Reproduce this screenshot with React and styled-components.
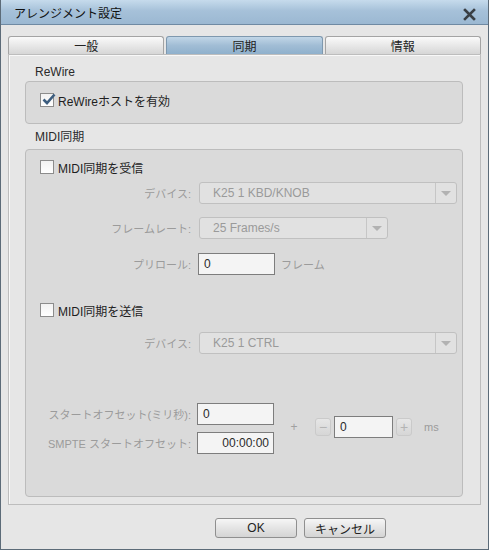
import React from "react";
import styled, { createGlobalStyle } from "styled-components";

const GlobalStyle = createGlobalStyle`
  html, body {
    margin: 0;
    padding: 0;
    background: #e6e6e6;
  }
  body {
    font-family: "Liberation Sans", "Noto Sans CJK JP", sans-serif;
    font-size: 12px;
    color: #1e1e1e;
  }
`;

const Window = styled.div`
  width: 489px;
  height: 550px;
  box-sizing: border-box;
  border: 1px solid #5c6b78;
  border-top: none;
  background: #e6e6e6;
  display: flex;
  flex-direction: column;
`;

const TitleBar = styled.div`
  height: 24px;
  flex: none;
  display: flex;
  align-items: center;
  justify-content: space-between;
  padding: 0 12px 0 13px;
  background: linear-gradient(#c6dbec, #a6c1d9 45%, #9bb8d2);
  border-bottom: 1px solid #6f8aa3;
  font-size: 12px;
  color: #111;
`;

const CloseIcon = () => (
  <svg width="13" height="13" viewBox="0 0 13 13" style={{ marginTop: 5 }}>
    <path d="M2 2 L11 11 M11 2 L2 11" stroke="#3a3f44" strokeWidth="2.6" strokeLinecap="square" />
  </svg>
);

const Body = styled.div`
  flex: 1;
  display: flex;
  flex-direction: column;
  padding: 11px 7px 0 7px;
`;

const Tabs = styled.div`
  display: flex;
  gap: 2px;
  height: 18px;
`;

const Tab = styled.div`
  flex: 1;
  box-sizing: border-box;
  border: 1px solid ${(p) => (p.$active ? "#7e98ae" : "#a4a4a4")};
  border-bottom: none;
  border-radius: 3px 3px 0 0;
  background: ${(p) =>
    p.$active
      ? "linear-gradient(#c1d6e7, #a1bdd5 50%, #8fb0cc)"
      : "linear-gradient(#fafafa, #e8e8e8 50%, #d6d6d6)"};
  display: flex;
  align-items: center;
  justify-content: center;
  font-size: 12px;
  color: #222;
`;

const Panel = styled.div`
  height: 451px;
  box-sizing: border-box;
  border: 1px solid #bdbdbd;
  box-shadow: inset 1px 1px 0 #f8f8f8;
  background: #e6e6e6;
  padding: 10px 17px 0 16px;
  display: flex;
  flex-direction: column;
`;

const SectionTitle = styled.div`
  padding-left: 10px;
  height: 14px;
  line-height: 14px;
  margin-top: ${(p) => p.$mt || 0}px;
  color: #2a2a2a;
`;

const Group = styled.div`
  box-sizing: border-box;
  height: ${(p) => p.$h}px;
  margin-top: ${(p) => p.$mt || 0}px;
  background: #dadada;
  border: 1px solid #bcbcbc;
  border-radius: 4px;
  padding: ${(p) => p.$pt}px 0 0 14px;
  display: flex;
  flex-direction: column;
`;

const CheckRow = styled.label`
  display: flex;
  align-items: center;
  gap: 4px;
  height: 16px;
  margin-top: ${(p) => p.$mt || 0}px;
  color: #1e1e1e;
`;

const Box = styled.span`
  width: 14px;
  height: 14px;
  box-sizing: border-box;
  border: 1px solid #8c8c8c;
  background: linear-gradient(#f2f2f2, #ffffff);
  position: relative;
  flex: none;
`;

const Check = () => (
  <svg width="16" height="14" viewBox="0 0 16 14" style={{ position: "absolute", left: 0, top: -2 }}>
    <path d="M2.5 7.5 L6 11 L13.5 2.5" fill="none" stroke="#3c5d7f" strokeWidth="2.6" />
  </svg>
);

const Field = styled.div`
  display: flex;
  align-items: center;
  height: 22px;
  margin-top: ${(p) => p.$mt || 0}px;
`;

const Label = styled.div`
  width: ${(p) => p.$w || 159}px;
  padding-right: ${(p) => p.$pr ?? 8}px;
  box-sizing: border-box;
  text-align: right;
  color: #9b9b9b;
  white-space: nowrap;
  font-size: 11px;
`;

const Select = styled.div`
  width: ${(p) => p.$w}px;
  height: 22px;
  box-sizing: border-box;
  border: 1px solid #c0c0c0;
  border-radius: 3px;
  background: #e1e1e1;
  display: flex;
  align-items: center;
  color: #9a9a9a;
`;

const SelectText = styled.div`
  flex: 1;
  padding-left: 13px;
`;

const Arrow = styled.div`
  width: 20px;
  height: 100%;
  border-left: 1px solid #c6c6c6;
  display: flex;
  align-items: center;
  justify-content: center;
  &::after {
    content: "";
    border-left: 5px solid transparent;
    border-right: 5px solid transparent;
    border-top: 5px solid #b2b2b2;
  }
`;

const Input = styled.div`
  width: ${(p) => p.$w || 77}px;
  height: 22px;
  box-sizing: border-box;
  border: 1px solid #7d7d7d;
  background: #f4f4f4;
  display: flex;
  align-items: center;
  justify-content: ${(p) => (p.$right ? "flex-end" : "flex-start")};
  padding: 0 4px 0 5px;
  color: #2a2a2a;
`;

const Unit = styled.span`
  margin-left: ${(p) => p.$ml ?? 6}px;
  color: #9b9b9b;
  font-size: 11px;
`;

const OffsetBlock = styled.div`
  display: flex;
  align-items: center;
  margin-top: 49px;
`;

const OffsetFields = styled.div`
  display: flex;
  flex-direction: column;
  gap: 7px;
`;

const Nudge = styled.div`
  display: flex;
  align-items: center;
  margin-left: 10px;
  margin-top: -3px;
  color: #a0a0a0;
`;

const Plus = styled.span`
  width: 20px;
  text-align: center;
  margin-right: 11px;
`;

const StepButton = styled.div`
  width: 16px;
  height: 18px;
  box-sizing: border-box;
  border: 1px solid #cacaca;
  border-radius: 3px;
  background: linear-gradient(#e6e6e6, #d6d6d6);
  color: #b4b4b4;
  display: flex;
  align-items: center;
  justify-content: center;
  font-size: 14px;
  margin: 0 ${(p) => p.$mr || 0}px 0 ${(p) => p.$ml || 0}px;
`;

const Footer = styled.div`
  flex: 1;
  display: flex;
  justify-content: flex-end;
  align-items: flex-start;
  gap: 7px;
  padding: 13px 95px 0 0;
`;

const Button = styled.div`
  width: 82px;
  height: 20px;
  box-sizing: border-box;
  border: 1px solid #8f8f8f;
  border-radius: 3px;
  background: linear-gradient(#f6f6f6, #e4e4e4 50%, #d4d4d4);
  display: flex;
  align-items: center;
  justify-content: center;
  color: #222;
`;

export default function App() {
  return (
    <>
      <GlobalStyle />
      <Window>
        <TitleBar>
          <span>アレンジメント設定</span>
          <CloseIcon />
        </TitleBar>
        <Body>
          <Tabs>
            <Tab>一般</Tab>
            <Tab $active>同期</Tab>
            <Tab>情報</Tab>
          </Tabs>
          <Panel>
            <SectionTitle>ReWire</SectionTitle>
            <Group $h={43} $mt={2} $pt={10}>
              <CheckRow>
                <Box>
                  <Check />
                </Box>
                ReWireホストを有効
              </CheckRow>
            </Group>
            <SectionTitle $mt={6}>MIDI同期</SectionTitle>
            <Group $h={348} $mt={5} $pt={9}>
              <CheckRow>
                <Box />
                MIDI同期を受信
              </CheckRow>
              <Field $mt={7}>
                <Label>デバイス:</Label>
                <Select $w={258}>
                  <SelectText>K25 1 KBD/KNOB</SelectText>
                  <Arrow />
                </Select>
              </Field>
              <Field $mt={13}>
                <Label>フレームレート:</Label>
                <Select $w={189}>
                  <SelectText>25 Frames/s</SelectText>
                  <Arrow />
                </Select>
              </Field>
              <Field $mt={14}>
                <Label $w={158} $pr={7}>プリロール:</Label>
                <Input>0</Input>
                <Unit>フレーム</Unit>
              </Field>
              <CheckRow $mt={27}>
                <Box />
                MIDI同期を送信
              </CheckRow>
              <Field $mt={14}>
                <Label>デバイス:</Label>
                <Select $w={258}>
                  <SelectText>K25 1 CTRL</SelectText>
                  <Arrow />
                </Select>
              </Field>
              <OffsetBlock>
                <OffsetFields>
                  <Field>
                    <Label $w={157} $pr={6}>スタートオフセット(ミリ秒):</Label>
                    <Input>0</Input>
                  </Field>
                  <Field>
                    <Label $w={157} $pr={6}>SMPTE スタートオフセット:</Label>
                    <Input $right>00:00:00</Input>
                  </Field>
                </OffsetFields>
                <Nudge>
                  <Plus>+</Plus>
                  <StepButton $mr={3}>−</StepButton>
                  <Input $w={59}>0</Input>
                  <StepButton $ml={3}>+</StepButton>
                  <Unit $ml={12}>ms</Unit>
                </Nudge>
              </OffsetBlock>
            </Group>
          </Panel>
          <Footer>
            <Button>OK</Button>
            <Button>キャンセル</Button>
          </Footer>
        </Body>
      </Window>
    </>
  );
}
